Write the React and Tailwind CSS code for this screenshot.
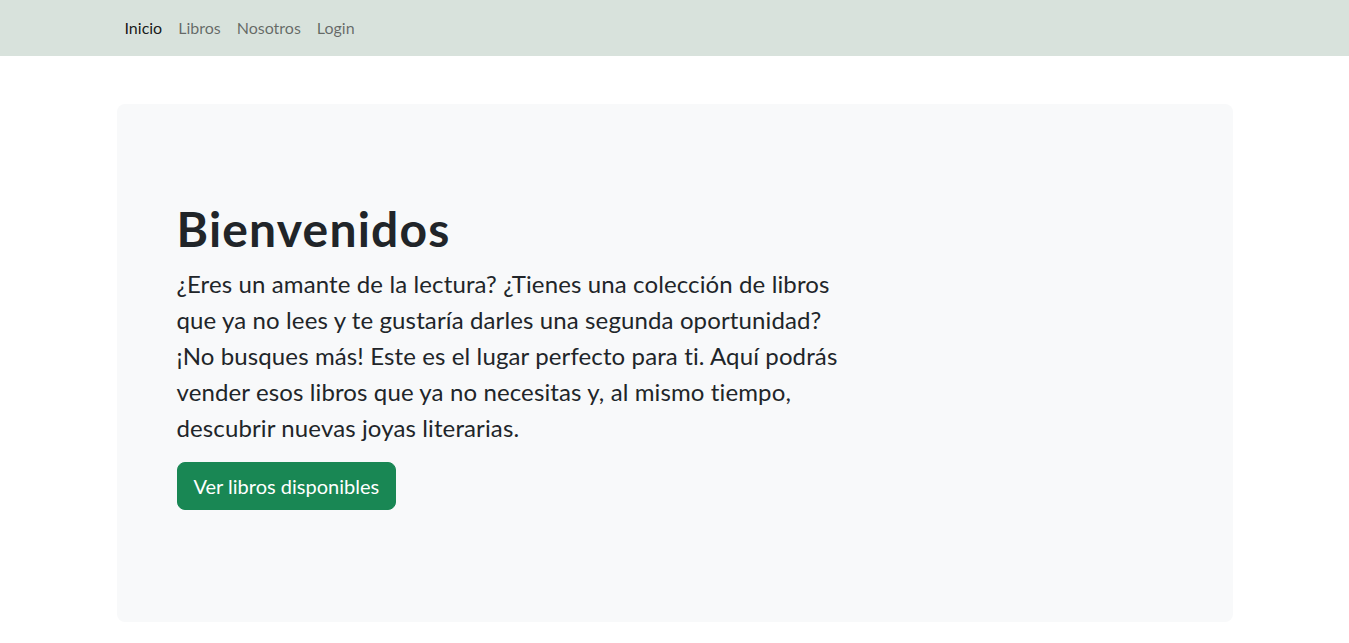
const LINKS = [
  { label: 'Inicio', active: true },
  { label: 'Libros' },
  { label: 'Nosotros' },
  { label: 'Login' },
]

export default function App() {
  return (
    <div className="min-h-screen bg-white text-[#212529]" style={{ fontFamily: 'Lato, "Noto Sans", sans-serif' }}>
      {/* Navbar */}
      <nav className="bg-[#d8e2dc] py-2">
        <div className="mx-auto w-[1140px] px-3 flex items-center">
          <ul className="flex">
            {LINKS.map((l) => (
              <li key={l.label}>
                <a
                  href="#"
                  className={`block px-2 py-2 text-[16px] leading-6 ${
                    l.active ? 'text-black/90' : 'text-black/55'
                  }`}
                >
                  {l.label}
                </a>
              </li>
            ))}
          </ul>
        </div>
      </nav>

      {/* Jumbotron */}
      <main className="mx-auto w-[1140px] px-3 pt-12">
        <div className="bg-[#f8f9fa] rounded-lg p-12 pb-16">
          <div className="px-3 py-12">
            <h1 className="text-[48px] font-bold leading-[1.2] tracking-[0.025em] mb-2">Bienvenidos</h1>
            <p className="w-[664px] text-[24px] leading-[1.5] tracking-[0.005em] mb-4">
              ¿Eres un amante de la lectura? ¿Tienes una colección de libros que ya no lees y te gustaría darles
              una segunda oportunidad? ¡No busques más! Este es el lugar perfecto para ti. Aquí podrás vender esos
              libros que ya no necesitas y, al mismo tiempo, descubrir nuevas joyas literarias.
            </p>
            <button
              type="button"
              className="bg-[#198754] text-white text-[20px] leading-[1.5] px-4 py-2 rounded-lg border border-[#198754]"
            >
              Ver libros disponibles
            </button>
          </div>
        </div>
      </main>
    </div>
  )
}
